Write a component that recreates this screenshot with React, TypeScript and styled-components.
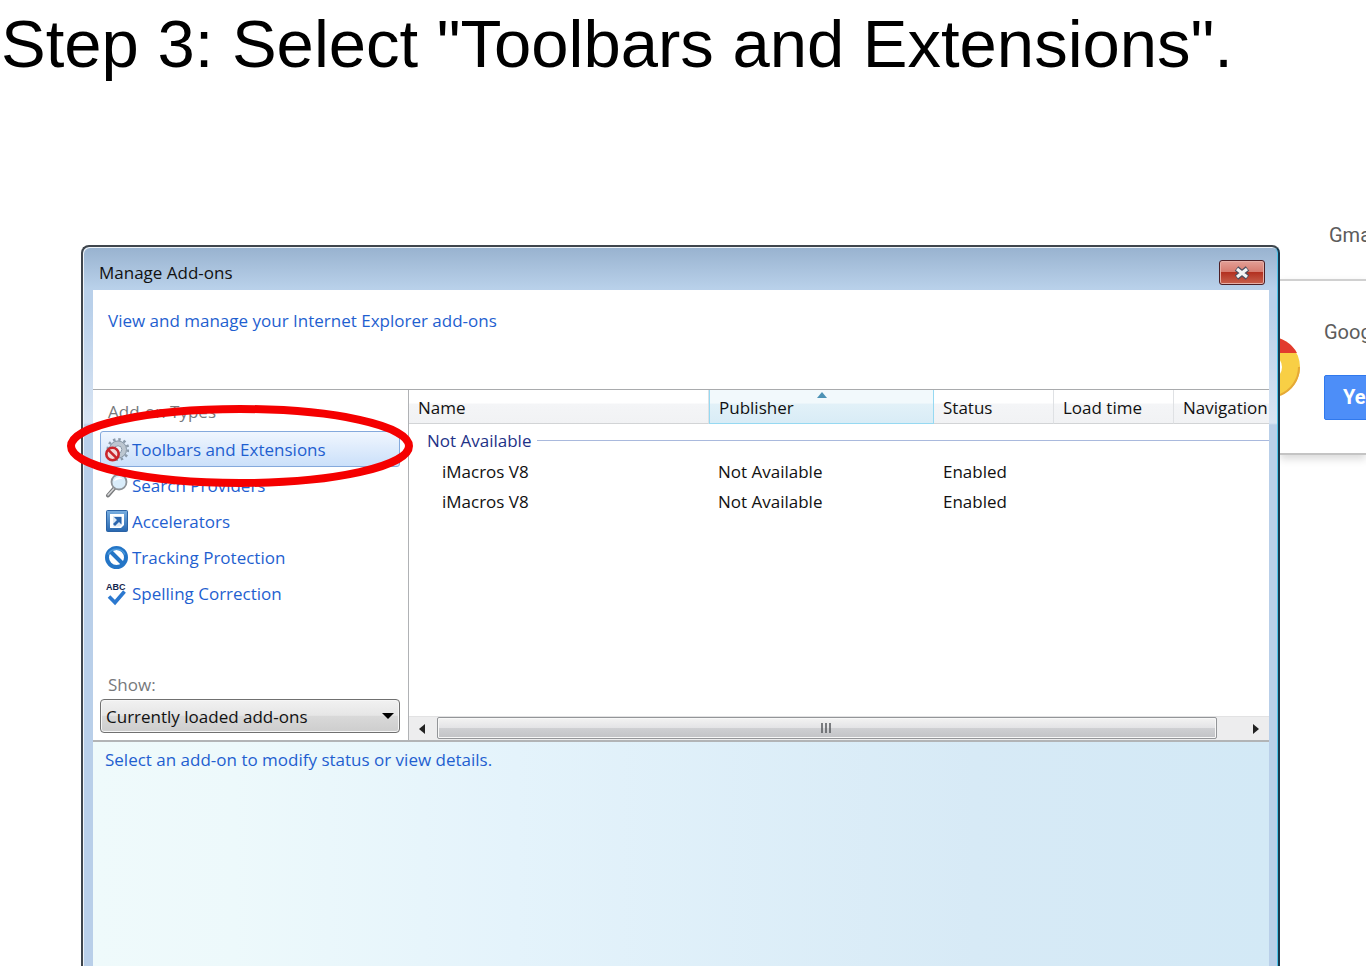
import React from 'react';
import styled, { createGlobalStyle, css } from 'styled-components';

const Global = createGlobalStyle`
  * { box-sizing: border-box; }
  body { margin: 0; background: #fff; font-family: "Open Sans", "Noto Sans", sans-serif; font-size: 17px; line-height: 24px; color: #111; }
  h1, h2, p, ul { margin: 0; padding: 0; font-weight: 400; }
  button, select { font: inherit; color: inherit; border: 0; padding: 0; margin: 0; background: none; }
`;

const Page = styled.div`
  min-height: 100vh;
  display: flex;
  flex-direction: column;
  overflow: hidden;
  padding-bottom: 2px;
`;

const Heading = styled.h1`
  font-family: "Liberation Sans", Arial, sans-serif;
  font-size: 67px;
  line-height: 80px;
  padding: 4px 0 0 1px;
  color: #000;
  white-space: nowrap;
  height: 214px;
`;

const Stage = styled.main`
  flex: 1;
  display: flex;
  padding-left: 81px;
`;

const Dialog = styled.section`
  flex: 1;
  min-width: 0;
  margin-top: 31px;
  display: flex;
  flex-direction: column;
  padding: 0 9px 0 10px;
  border: 2px solid #3f454c;
  border-right-color: #17384e;
  border-bottom: 0;
  border-radius: 8px 8px 0 0;
  box-shadow: inset 1px 1px 0 #eef3f8, inset -1px 0 0 #4fc4ea;
  background:
    linear-gradient(#98b2cf, #b9d1ea 42px, transparent 43px),
    linear-gradient(#b9d0ea 60px, #d8e4f3 176px, #b9cfe9 178px);
`;

const TitleBar = styled.header`
  height: 43px;
  flex: none;
  display: flex;
  align-items: center;
  justify-content: space-between;
  padding: 8px 4px 0 6px;
`;

const Title = styled.h2`
  font-size: 17px;
`;

const CloseButton = styled.button`
  width: 46px;
  height: 25px;
  display: grid;
  place-items: center;
  border: 1px solid #4d1f25;
  border-radius: 3px;
  box-shadow: inset 0 0 0 1px #e6b0a8;
  background: linear-gradient(#e3a097, #d67a6e 48%, #b33121 50%, #c8614d);
`;

const Client = styled.div`
  flex: 1;
  display: flex;
  flex-direction: column;
  background: #fff;
`;

const Intro = styled.div`
  height: 99px;
  padding: 19px 15px;
  color: #1f5fd0;
`;

const Body = styled.div`
  display: flex;
  height: 353px;
  border-top: 1px solid #a9abad;
  border-bottom: 2px solid #b2b4b6;
`;

const Sidebar = styled.div`
  width: 316px;
  flex: none;
  display: flex;
  flex-direction: column;
  justify-content: space-between;
  position: relative;
  padding: 10px 8px 7px 7px;
  border-right: 1px solid #b0b2b5;
`;

const Caption = styled.div`
  padding-left: 8px;
  color: #77797c;
`;

const TypeList = styled.ul`
  list-style: none;
  padding-top: 7px;
`;

const TypeButton = styled.button<{ $selected?: boolean }>`
  width: 100%;
  height: 36px;
  display: flex;
  align-items: center;
  gap: 3px;
  padding: 2px 0 0 4px;
  border: 1px solid transparent;
  border-radius: 3px;
  color: #1f5fd0;
  text-align: left;
  ${p => p.$selected && css`
    border-color: #84a9dc;
    background: linear-gradient(#f0f6fe, #cbe0fa);
  `}
  svg { flex: none; }
`;

const Ring = styled.svg`
  position: absolute;
  left: -27px;
  top: 14px;
  pointer-events: none;
`;

const SelectBox = styled.div`
  display: grid;
  margin-top: 2px;
  align-items: center;
  > * { grid-area: 1 / 1; }
  svg { justify-self: end; margin-right: 6px; pointer-events: none; }
`;

const Select = styled.select`
  appearance: none;
  width: 100%;
  height: 34px;
  padding: 2px 0 0 5px;
  border: 1px solid #707070;
  border-radius: 4px;
  box-shadow: inset 0 0 0 1px #f6f6f6;
  background: linear-gradient(#f1f1f1, #e6e6e6 48%, #d9d9d9 50%, #cdcdcd);
`;

const ListPane = styled.div`
  flex: 1;
  min-width: 0;
  display: flex;
  flex-direction: column;
  overflow: hidden;
`;

const Table = styled.table`
  width: 100%;
  table-layout: fixed;
  border-collapse: separate;
  border-spacing: 0;
  td, th { padding: 0 0 0 9px; text-align: left; font-weight: 400; white-space: nowrap; overflow: hidden; }
  th { padding-top: 2px; }
`;

const Th = styled.th<{ $w?: number; $sorted?: boolean }>`
  ${p => p.$w && css`width: ${p.$w}px;`}
  height: 34px;
  position: relative;
  border-right: 1px solid #dfe1e4;
  border-bottom: 1px solid #d2d4d6;
  background: linear-gradient(#fff 40%, #f4f5f7 42%, #f1f2f4);
  &:last-child { border-right: 0; }
  ${p => p.$sorted && css`
    border: solid #96d9f2;
    border-width: 0 1px 1px;
    background: linear-gradient(#f2f9fc 40%, #e2f1f8 42%, #d8ecf6);
  `}
  svg { position: absolute; left: calc(50% - 5px); top: 2px; }
`;

const GroupLabel = styled.div`
  height: 33px;
  display: flex;
  align-items: center;
  gap: 6px;
  padding-left: 9px;
  color: #1e3287;
  &::after { content: ""; flex: 1; height: 1px; background: #a9b9dd; }
`;

const Row = styled.tr`
  height: 30px;
  td:first-child { padding-left: 33px; }
`;

const ScrollBar = styled.div`
  margin-top: auto;
  height: 24px;
  display: flex;
  background: #ededee;
  border-top: 1px solid #e2e2e3;
`;

const ScrollButton = styled.button`
  width: 26px;
  display: grid;
  place-items: center;
`;

const ThumbTrack = styled.div`
  flex: 1;
  padding: 0 26px 0 2px;
`;

const Thumb = styled.div`
  height: 22px;
  display: grid;
  place-items: center;
  border: 1px solid #939598;
  border-radius: 2px;
  box-shadow: inset 0 0 0 1px #f8f8f8;
  background: linear-gradient(#f3f3f3, #e4e4e6 48%, #cfd0d3 50%, #c2c3c6);
`;

const Details = styled.div`
  flex: 1;
  padding: 6px 12px;
  color: #1f5fd0;
  background: linear-gradient(90deg, #effafb, #edf9fb 12%, #e4f3fb 36%, #d7eaf6 75%, #d3e9f6);
`;

const Behind = styled.aside`
  width: 86px;
  flex: none;
  overflow: hidden;
  white-space: nowrap;
  font-family: Roboto, "Liberation Sans", sans-serif;
  font-size: 20px;
  color: #5c5c5c;
`;

const MailLink = styled.a`
  display: block;
  height: 65px;
  padding: 9px 0 0 49px;
  color: #5c5c5c;
  text-decoration: none;
`;

const Promo = styled.div`
  height: 176px;
  display: flex;
  border-top: 2px solid #d0d0d0;
  border-bottom: 2px solid #c4c4c4;
  box-shadow: 0 4px 8px #dadada;
`;

const PromoLogo = styled.svg`
  flex: none;
  margin-top: 55px;
`;

const PromoText = styled.div`
  flex: none;
  width: 160px;
  padding: 39px 0 0 24px;
`;

const YesButton = styled.button`
  display: block;
  width: 110px;
  height: 45px;
  margin-top: 31px;
  padding: 0 0 2px 18px;
  border: 1px solid #3079ed;
  border-radius: 2px;
  background: #4d8ef8;
  color: #fff;
  font-weight: 700;
  text-align: left;
`;

const GearIcon = () => (
  <svg width="24" height="24" viewBox="0 0 24 24">
    <circle cx="13" cy="11.500" r="10" fill="none" stroke="#8b9aaa" strokeWidth="3" strokeDasharray="2.400 2.836" />
    <circle cx="13" cy="11.500" r="6.500" fill="none" stroke="#bcc6d0" strokeWidth="5" />
    <circle cx="13" cy="11.500" r="8.500" fill="none" stroke="#8d9cab" />
    <circle cx="13" cy="11.500" r="3.800" fill="#eef4fa" stroke="#8796a6" />
    <circle cx="7.500" cy="16" r="6.200" fill="#f3dada" stroke="#c9252b" strokeWidth="2.600" />
    <path d="M3.300 11.800l8.400 8.400" stroke="#c9252b" strokeWidth="2.600" />
  </svg>
);

const SearchIcon = () => (
  <svg width="24" height="24" viewBox="0 0 24 24">
    <path d="M9.500 14L3 21.500" stroke="#77797b" strokeWidth="4" strokeLinecap="round" />
    <path d="M9 14.500L3 21" stroke="#d7d8d9" strokeWidth="1.500" strokeLinecap="round" />
    <circle cx="14" cy="8" r="7.500" fill="#d9ecfa" stroke="#8d9297" strokeWidth="1.800" />
    <path d="M9 7.500a5 5 0 0 1 9-2c-3-1-6 0-9 2z" fill="#fff" />
  </svg>
);

const AcceleratorIcon = () => (
  <svg width="24" height="24" viewBox="0 0 24 24">
    <defs>
      <linearGradient id="accel" x1="0" y1="0" x2="0" y2="1">
        <stop offset="0" stopColor="#79aee0" /><stop offset="1" stopColor="#2767b0" />
      </linearGradient>
    </defs>
    <rect x="1.500" y=".500" width="21" height="21" rx="1" fill="url(#accel)" stroke="#2a62a5" />
    <path d="M5 4h14v11l-3 3H5z" fill="#fff" />
    <path d="M8 6h8.500v9l-2 1.500H8z" fill="#dbe8f6" />
    <path d="M9 7h7.500v7.500l-2.500-2.500-4 4-2-2 4-4z" fill="#2a65ad" />
  </svg>
);

const BlockIcon = () => (
  <svg width="24" height="24" viewBox="0 0 24 24">
    <circle cx="11.500" cy="11.500" r="9.500" fill="#fff" stroke="#2475c6" strokeWidth="4" />
    <path d="M5 5L18 18" stroke="#2475c6" strokeWidth="4" />
    <path d="M3 8.500a9.500 9.500 0 0 1 17 0" fill="none" stroke="#4b9ade" strokeWidth="1.500" />
  </svg>
);

const SpellingIcon = () => (
  <svg width="24" height="24" viewBox="0 0 24 24">
    <text x="1" y="8" fontFamily="Liberation Sans, sans-serif" fontSize="9" fontWeight="700" fill="#14264e">ABC</text>
    <path d="M4 14.500l6 6L19.500 9.500" fill="none" stroke="#2b78cf" strokeWidth="3.600" />
  </svg>
);

const types = [
  { label: 'Toolbars and Extensions', Icon: GearIcon, selected: true },
  { label: 'Search Providers', Icon: SearchIcon },
  { label: 'Accelerators', Icon: AcceleratorIcon },
  { label: 'Tracking Protection', Icon: BlockIcon },
  { label: 'Spelling Correction', Icon: SpellingIcon },
];

const addons = [
  { id: 1, name: 'iMacros V8', publisher: 'Not Available', status: 'Enabled' },
  { id: 2, name: 'iMacros V8', publisher: 'Not Available', status: 'Enabled' },
];

export default function App() {
  return (
    <Page>
      <Global />
      <Heading>Step 3: Select "Toolbars and Extensions".</Heading>
      <Stage>
        <Dialog aria-labelledby="dialog-title">
          <TitleBar>
            <Title id="dialog-title">Manage Add-ons</Title>
            <CloseButton aria-label="Close">
              <svg width="18" height="14" viewBox="0 0 18 14">
                <path d="M3.500 2.500l11 9M14.500 2.500l-11 9" stroke="#4b4f60" strokeWidth="5.500" />
                <path d="M4 3l10 8M14 3l-10 8" stroke="#f4f4f4" strokeWidth="3.200" />
              </svg>
            </CloseButton>
          </TitleBar>
          <Client>
            <Intro>View and manage your Internet Explorer add-ons</Intro>
            <Body>
              <Sidebar>
                <nav aria-label="Add-on types">
                  <Caption>Add-on Types</Caption>
                  <TypeList>
                    {types.map(({ label, Icon, selected }) => (
                      <li key={label}>
                        <TypeButton $selected={selected}><Icon />{label}</TypeButton>
                      </li>
                    ))}
                  </TypeList>
                </nav>
                <div>
                  <Caption as="label" htmlFor="show">Show:</Caption>
                  <SelectBox>
                    <Select id="show"><option>Currently loaded add-ons</option></Select>
                    <svg width="12" height="6" viewBox="0 0 12 6"><path d="M0 0h12L6 6z" fill="#000" /></svg>
                  </SelectBox>
                </div>
                <Ring width="348" height="84" viewBox="0 0 348 84">
                  <ellipse cx="174" cy="42" rx="169" ry="37" fill="none" stroke="#f50000" strokeWidth="8" />
                </Ring>
              </Sidebar>
              <ListPane>
                <Table>
                  <thead>
                    <tr>
                      <Th>Name</Th>
                      <Th $w={225} $sorted>
                        Publisher
                        <svg width="10" height="6" viewBox="0 0 10 6"><path d="M0 6L5 0l5 6z" fill="#4d92b5" /></svg>
                      </Th>
                      <Th $w={120}>Status</Th>
                      <Th $w={120}>Load time</Th>
                      <Th $w={95}>Navigation</Th>
                    </tr>
                  </thead>
                  <tbody>
                    <tr><td colSpan={5}><GroupLabel>Not Available</GroupLabel></td></tr>
                    {addons.map(a => (
                      <Row key={a.id}>
                        <td>{a.name}</td><td>{a.publisher}</td><td>{a.status}</td><td /><td />
                      </Row>
                    ))}
                  </tbody>
                </Table>
                <ScrollBar>
                  <ScrollButton aria-label="Scroll left">
                    <svg width="6" height="10" viewBox="0 0 6 10"><path d="M6 0v10L0 5z" fill="#222" /></svg>
                  </ScrollButton>
                  <ThumbTrack>
                    <Thumb>
                      <svg width="12" height="10" viewBox="0 0 12 10"><path d="M1 0v10M5 0v10M9 0v10" stroke="#55585c" strokeWidth="1.500" /></svg>
                    </Thumb>
                  </ThumbTrack>
                  <ScrollButton aria-label="Scroll right">
                    <svg width="6" height="10" viewBox="0 0 6 10"><path d="M0 0v10l6-5z" fill="#222" /></svg>
                  </ScrollButton>
                </ScrollBar>
              </ListPane>
            </Body>
            <Details>Select an add-on to modify status or view details.</Details>
          </Client>
        </Dialog>
        <Behind>
          <MailLink href="#mail">Gmail</MailLink>
          <Promo>
            <PromoLogo width="20" height="62" viewBox="0 0 20 62">
              <circle cx="-10" cy="31" r="30" fill="#f8cf45" />
              <path d="M-10 1a30 30 0 0 1 27 16H-10z" fill="#e23b2e" />
              <path d="M0 59A30 30 0 0 0 19 31" fill="none" stroke="#e5a936" strokeWidth="2" />
              <circle cx="-10" cy="31" r="12" fill="#fff" />
            </PromoLogo>
            <PromoText>
              Google Chrome
              <YesButton>Yes</YesButton>
            </PromoText>
          </Promo>
        </Behind>
      </Stage>
    </Page>
  );
}
